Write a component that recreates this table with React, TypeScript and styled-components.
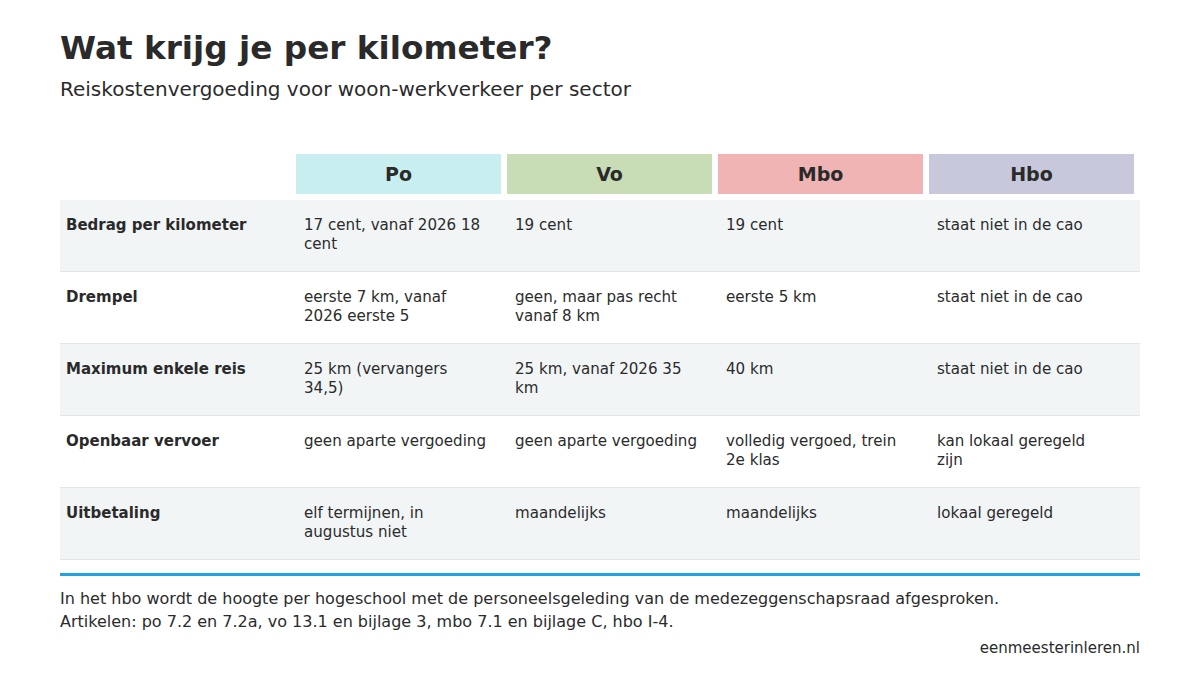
import React from 'react'
import styled, { createGlobalStyle } from 'styled-components'

const GlobalStyle = createGlobalStyle`
  html, body {
    margin: 0;
    padding: 0;
    background: #ffffff;
  }
  body {
    font-family: 'DejaVu Sans', 'Liberation Sans', sans-serif;
    color: #2b2b2b;
  }
`

const Page = styled.div`
  width: 1200px;
  height: 675px;
  box-sizing: border-box;
  padding: 28px 60px 0 60px;
  display: flex;
  flex-direction: column;
`
const Title = styled.h1`
  margin: 0;
  font-size: 32.7px;
  line-height: 40px;
  font-weight: bold;
  color: #2a2a2a;
`
const Subtitle = styled.div`
  margin-top: 9px;
  font-size: 20px;
  line-height: 24px;
  color: #2b2b2b;
`
const Table = styled.div`
  margin-top: 53px;
  display: grid;
  grid-template-columns: 236px repeat(4, 211px);
`
const HeadSpacer = styled.div`
  height: 40px;
  margin-bottom: 6px;
`
const HeadCell = styled.div<{ $bg: string }>`
  height: 40px;
  margin-right: 6px;
  margin-bottom: 6px;
  background: ${props => props.$bg};
  display: flex;
  align-items: center;
  justify-content: center;
  font-size: 19px;
  font-weight: bold;
  color: #2a2a2a;
`
const Row = styled.div<{ $shaded: boolean }>`
  grid-column: 1 / -1;
  display: grid;
  grid-template-columns: 236px repeat(4, 211px);
  height: 72px;
  box-sizing: border-box;
  background: ${props => (props.$shaded ? '#f2f5f6' : '#ffffff')};
  border-bottom: 1px solid #e1e5e7;
`
const Label = styled.div`
  padding: 16px 6px 0 6px;
  font-size: 15px;
  line-height: 19px;
  font-weight: bold;
  color: #2a2a2a;
`
const Cell = styled.div<{ $last?: boolean }>`
  padding: 16px ${props => (props.$last ? '34px' : '19px')} 0 8px;
  font-size: 15.1px;
  line-height: 19px;
  color: #2b2b2b;
`
const Rule = styled.div`
  margin-top: 13px;
  height: 3px;
  background: #1fa2dd;
`
const Notes = styled.div`
  margin-top: 11px;
  font-size: 16px;
  line-height: 23px;
  color: #2b2b2b;
`
const Source = styled.div`
  margin-top: 4px;
  text-align: right;
  font-size: 15px;
  line-height: 23px;
  color: #2b2b2b;
`

const sectors = [
  { name: 'Po', bg: '#c8eeef' },
  { name: 'Vo', bg: '#c8ddb5' },
  { name: 'Mbo', bg: '#f0b4b4' },
  { name: 'Hbo', bg: '#c8c8dc' },
]

const rows = [
  { label: 'Bedrag per kilometer', values: ['17 cent, vanaf 2026 18 cent', '19 cent', '19 cent', 'staat niet in de cao'] },
  { label: 'Drempel', values: ['eerste 7 km, vanaf 2026 eerste 5', 'geen, maar pas recht vanaf 8 km', 'eerste 5 km', 'staat niet in de cao'] },
  { label: 'Maximum enkele reis', values: ['25 km (vervangers 34,5)', '25 km, vanaf 2026 35 km', '40 km', 'staat niet in de cao'] },
  { label: 'Openbaar vervoer', values: ['geen aparte vergoeding', 'geen aparte vergoeding', 'volledig vergoed, trein 2e klas', 'kan lokaal geregeld zijn'] },
  { label: 'Uitbetaling', values: ['elf termijnen, in augustus niet', 'maandelijks', 'maandelijks', 'lokaal geregeld'] },
]

export default function App() {
  return (
    <>
      <GlobalStyle />
      <Page>
        <Title>Wat krijg je per kilometer?</Title>
        <Subtitle>Reiskostenvergoeding voor woon-werkverkeer per sector</Subtitle>
        <Table>
          <HeadSpacer />
          {sectors.map(s => (
            <HeadCell key={s.name} $bg={s.bg}>{s.name}</HeadCell>
          ))}
          {rows.map((r, i) => (
            <Row key={r.label} $shaded={i % 2 === 0}>
              <Label>{r.label}</Label>
              {r.values.map((v, j) => (
                <Cell key={j} $last={j === r.values.length - 1}>{v}</Cell>
              ))}
            </Row>
          ))}
        </Table>
        <Rule />
        <Notes>
          In het hbo wordt de hoogte per hogeschool met de personeelsgeleding van de medezeggenschapsraad afgesproken.
          <br />
          Artikelen: po 7.2 en 7.2a, vo 13.1 en bijlage 3, mbo 7.1 en bijlage C, hbo I-4.
        </Notes>
        <Source>eenmeesterinleren.nl</Source>
      </Page>
    </>
  )
}
